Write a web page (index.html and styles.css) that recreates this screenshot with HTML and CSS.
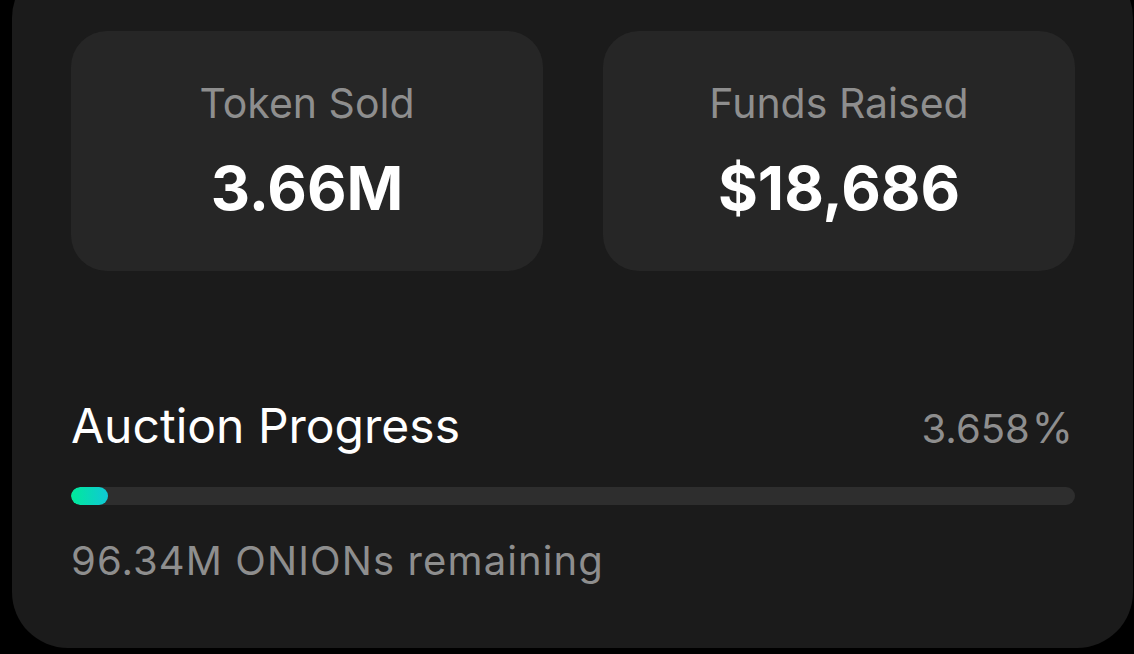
FILE: index.html
```html
<!DOCTYPE html>
<html>
<head>
<meta charset="utf-8">
<link rel="stylesheet" href="styles.css">
</head>
<body>
<div class="panel">
  <div class="stats">
    <div class="stat">
      <div class="stat-label">Token Sold</div>
      <div class="stat-value">3.66M</div>
    </div>
    <div class="stat">
      <div class="stat-label">Funds Raised</div>
      <div class="stat-value">$18,686</div>
    </div>
  </div>
  <div class="progress">
    <div class="progress-head">
      <div class="progress-title">Auction Progress</div>
      <div class="progress-pct">3.658<span class="pct">%</span></div>
    </div>
    <div class="bar"><div class="bar-fill" style="width: 3.658%"></div></div>
    <div class="remaining">96.34M ONIONs remaining</div>
  </div>
</div>
</body>
</html>
```
FILE: styles.css
```css
html, body {
  margin: 0;
  padding: 0;
  background: #000;
  height: 100%;
  overflow: hidden;
}
body {
  font-family: Inter, "Noto Sans", sans-serif;
}
.panel {
  margin: -38px 1px 0 12px;
  padding: 69px 58px 63px 59px;
  background: #1b1b1b;
  border-radius: 56px;
}
.stats {
  display: grid;
  grid-template-columns: 1fr 1fr;
  gap: 60px;
}
.stat {
  background: #262626;
  border-radius: 36px;
  height: 240px;
  box-sizing: border-box;
  padding-top: 47px;
  text-align: center;
}
.stat-label {
  color: #8e8e8e;
  font-size: 41px;
  line-height: 50px;
}
.stat-value {
  color: #fff;
  font-size: 61px;
  font-weight: 700;
  line-height: 68px;
  margin-top: 26px;
}
.progress {
  margin-top: 126px;
}
.progress-head {
  display: flex;
  justify-content: space-between;
  align-items: baseline;
}
.progress-title {
  color: #fff;
  font-size: 48px;
  line-height: 58px;
}
.progress-pct {
  color: #8e8e8e;
  font-size: 40px;
  line-height: 58px;
  padding-right: 2px;
}
.pct {
  margin-left: 2px;
  font-size: 42px;
}
.bar {
  margin-top: 29px;
  height: 18px;
  border-radius: 9px;
  background: #2e2e2e;
  overflow: hidden;
}
.bar-fill {
  height: 100%;
  border-radius: 9px;
  background: linear-gradient(90deg, #00ea9a, #10c8d6);
}
.remaining {
  margin-top: 32px;
  color: #8e8e8e;
  font-size: 40px;
  letter-spacing: 1.1px;
  line-height: 48px;
}
```
